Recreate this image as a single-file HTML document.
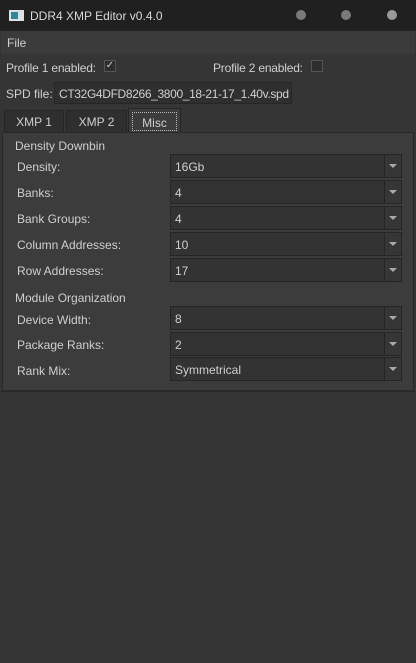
<!DOCTYPE html>
<html><head><style>
*{margin:0;padding:0;box-sizing:border-box}
body{width:416px;height:663px;background:#353535;font-family:"Liberation Sans",sans-serif;font-size:12px;color:#cfcfcf;position:relative;overflow:hidden}
.a{position:absolute;white-space:nowrap}
.title{left:0;top:0;width:416px;height:31px;background:#202020}
.dot{width:10px;height:10px;border-radius:50%;background:#7a7a7a;top:10px}
.menu{left:1px;top:31px;width:414px;height:23px;background:#3b3b3b}
.cb{width:12px;height:12px;border:1px solid #555;background:#2e2e2e}
.inp{left:54px;top:82px;width:238px;height:22px;background:#2f2f2f;border:1px solid #262626;padding:4px 4px;font-size:12px;letter-spacing:-0.35px;overflow:hidden}
.tab{top:110px;height:22px;background:#2f2f2f;border:1px solid #262626;border-bottom:none;text-align:center;padding-top:4px;font-size:12px}
.panel{left:2px;top:132px;width:412px;height:259px;background:#3c3c3c;border:1px solid #2a2a2a}
.lbl{left:17px}
.combo{left:170px;width:232px;height:24px;background:#333;border:1px solid #252525;padding:5px 4px;font-size:12px}
.combo:after{content:"";position:absolute;right:0;top:0;width:16px;height:22px;border-left:1px solid #252525;background:#363636}
.combo i{position:absolute;right:4px;top:9px;width:0;height:0;border-left:4px solid transparent;border-right:4px solid transparent;border-top:4px solid #aaa;z-index:2}
.bottom{left:0;top:391px;width:416px;height:272px;background:#353535;border-top:1px solid #2a2a2a}
</style></head><body>
<div class="a title"></div>
<div class="a" style="left:9px;top:10px;width:15px;height:11px;background:#e0e0e0"><div class="a" style="left:2px;top:2px;width:7px;height:7px;background:#2a8a9a"></div></div>
<div class="a" style="left:30px;top:9px;font-size:12px;color:#d8d8d8">DDR4 XMP Editor v0.4.0</div>
<div class="a dot" style="left:296px"></div>
<div class="a dot" style="left:341px"></div>
<div class="a dot" style="left:387px;background:#9a9a9a"></div>
<div class="a menu"><span class="a" style="left:6px;top:5px">File</span></div>
<div class="a" style="left:6px;top:61px;letter-spacing:-0.2px">Profile 1 enabled:</div>
<div class="a cb" style="left:104px;top:60px;color:#ccc;font-size:10px;line-height:10px;text-align:center">✓</div>
<div class="a" style="left:213px;top:61px;letter-spacing:-0.2px">Profile 2 enabled:</div>
<div class="a cb" style="left:311px;top:60px"></div>
<div class="a" style="left:6px;top:87px">SPD file:</div>
<div class="a inp">CT32G4DFD8266_3800_18-21-17_1.40v.spd</div>
<div class="a tab" style="left:4px;width:60px">XMP 1</div>
<div class="a tab" style="left:66px;width:61px">XMP 2</div>
<div class="a tab" style="left:128px;top:108px;height:25px;width:53px;background:#3c3c3c;padding:3px 3px 0"><div style="border:1px dotted #bbb;height:19px;padding-top:3px">Misc</div></div>
<div class="a panel"></div>
<div class="a" style="left:15px;top:139px">Density Downbin</div>
<div class="a lbl" style="top:160px">Density:</div><div class="a combo" style="top:154px">16Gb<i></i></div>
<div class="a lbl" style="top:186px">Banks:</div><div class="a combo" style="top:180px">4<i></i></div>
<div class="a lbl" style="top:212px">Bank Groups:</div><div class="a combo" style="top:206px">4<i></i></div>
<div class="a lbl" style="top:238px">Column Addresses:</div><div class="a combo" style="top:232px">10<i></i></div>
<div class="a lbl" style="top:264px">Row Addresses:</div><div class="a combo" style="top:258px">17<i></i></div>
<div class="a" style="left:15px;top:291px">Module Organization</div>
<div class="a lbl" style="top:313px">Device Width:</div><div class="a combo" style="top:306px">8<i></i></div>
<div class="a lbl" style="top:338px">Package Ranks:</div><div class="a combo" style="top:332px">2<i></i></div>
<div class="a lbl" style="top:364px">Rank Mix:</div><div class="a combo" style="top:357px">Symmetrical<i></i></div>
<div class="a bottom"></div>
</body></html>
